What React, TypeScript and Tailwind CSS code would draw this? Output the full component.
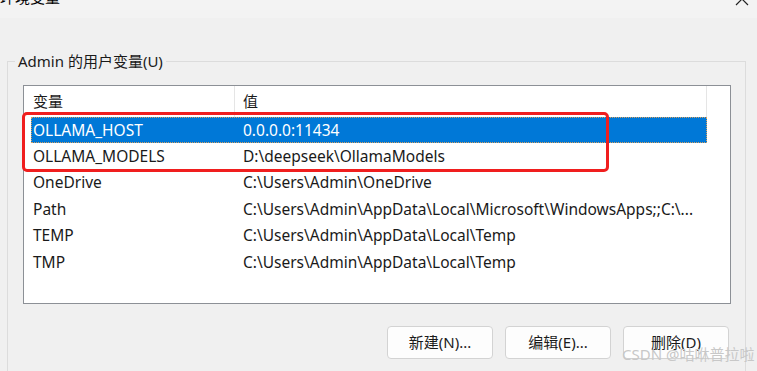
import React from 'react';

type EnvVar = { name: string; value: string };

const vars: EnvVar[] = [
  { name: 'OLLAMA_HOST', value: '0.0.0.0:11434' },
  { name: 'OLLAMA_MODELS', value: 'D:\\deepseek\\OllamaModels' },
  { name: 'OneDrive', value: 'C:\\Users\\Admin\\OneDrive' },
  { name: 'Path', value: 'C:\\Users\\Admin\\AppData\\Local\\Microsoft\\WindowsApps;;C:\\...' },
  { name: 'TEMP', value: 'C:\\Users\\Admin\\AppData\\Local\\Temp' },
  { name: 'TMP', value: 'C:\\Users\\Admin\\AppData\\Local\\Temp' },
];

const font = "font-['Noto_Sans','Noto_Sans_CJK_SC',sans-serif]";

const WinButton: React.FC<{ label: string }> = ({ label }) => (
  <button className="w-[106px] h-[33px] bg-[#fdfdfd] border border-[#d3d3d3] rounded-[4px] text-[15px] text-[#1b1b1b] flex items-center justify-center">
    {label}
  </button>
);

export default function App() {
  return (
    <div className={`relative w-[757px] h-[371px] overflow-hidden bg-[#f0f0f0] text-[#1a1a1a] ${font}`}>
      {/* Title bar (cut off at top) */}
      <div className="h-[18px] bg-[#f3f3f3] overflow-hidden flex justify-between items-start">
        <span className="text-[15px] leading-[18px] -mt-[12px] text-black">环境变量</span>
        <svg width="14" height="14" viewBox="0 0 14 14" className="-mt-[8px] mr-[8px]" fill="none" stroke="#222" strokeWidth="1.2">
          <path d="M1 1L13 13M13 1L1 13" />
        </svg>
      </div>

      <fieldset className="ml-[7px] mt-[34px] w-[739px] h-[400px] border border-[#dcdcdc] px-0">
        <legend className="ml-[7px] px-[3px] text-[15px] leading-[18px]">Admin 的用户变量(U)</legend>

        {/* List view */}
        <div className="ml-[15px] mt-[15px] w-[708px] h-[219px] border border-[#8c9096] bg-white pl-[7px]">
          <div className="flex h-[31px] w-[676px] text-[15px]">
            <div className="w-[203px] pl-[2px] flex items-center">变量</div>
            <div className="flex-1 pl-[8px] flex items-center border-l border-[#e5e5e5] border-r">值</div>
          </div>
          {vars.map((v, i) => (
            <div
              key={v.name}
              className={`flex h-[26.4px] w-[676px] items-center text-[15.5px] ${
                i === 0 ? 'bg-[#0078d7] text-white border border-dotted border-[#d6a060]' : 'border border-transparent'
              }`}
            >
              <div className="w-[202px] pl-[1px] whitespace-nowrap">{v.name}</div>
              <div className="flex-1 pl-[9px] whitespace-nowrap">{v.value}</div>
            </div>
          ))}
        </div>

        <div className="flex justify-end gap-[12px] pr-[16px] mt-[22px]">
          <WinButton label="新建(N)..." />
          <WinButton label="编辑(E)..." />
          <WinButton label="删除(D)" />
        </div>
      </fieldset>

      {/* Red annotation box */}
      <div className="absolute left-[22px] top-[112px] w-[587px] h-[60px] border-[3px] border-[#f01e1e] rounded-[5px]" />

      {/* Watermark */}
      <div className="absolute left-[622px] top-[344px] text-[15px] leading-[20px] text-[#c8c8c8] whitespace-nowrap">
        CSDN @咕咻普拉啦
      </div>
    </div>
  );
}
